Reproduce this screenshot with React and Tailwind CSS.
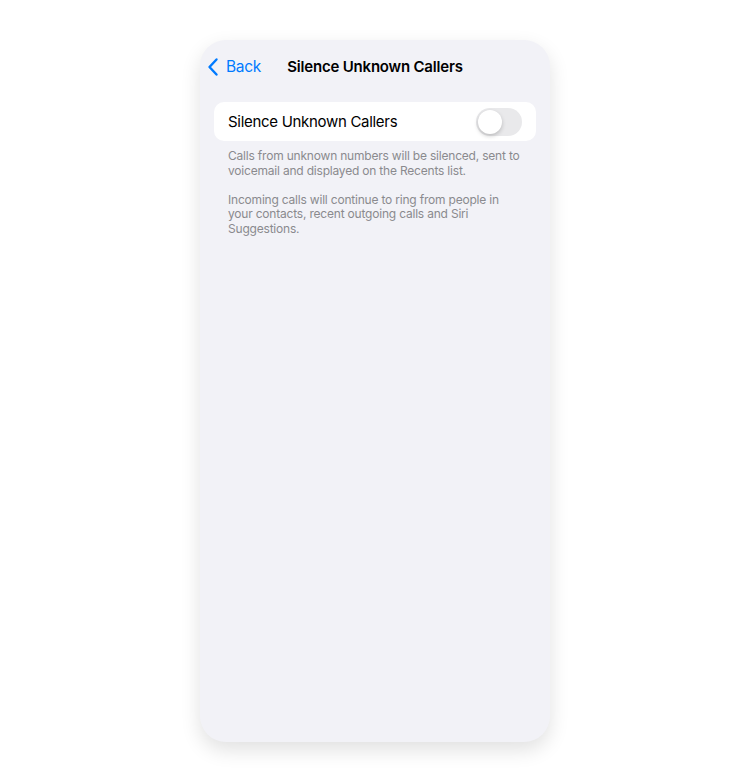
import React, { useState } from 'react';

function Toggle({ on, onChange }) {
    return (
        <button
            onClick={() => onChange(!on)}
            className={`relative w-[46px] h-[28px] rounded-full transition-colors ${on ? 'bg-[#34c759]' : 'bg-[#e9e9eb]'}`}
        >
            <span
                className={`absolute top-[2px] w-[24px] h-[24px] rounded-full bg-white shadow-[0_2px_4px_rgba(0,0,0,0.2)] transition-all ${on ? 'left-[20px]' : 'left-[2px]'}`}
            />
        </button>
    );
}

export default function App() {
    const [silenced, setSilenced] = useState(false);

    return (
        <div className="min-h-screen bg-white flex justify-center pt-[40px] font-['Inter',sans-serif]">
            <div className="w-[350px] h-[702px] bg-[#f2f2f7] rounded-[26px] shadow-[0_8px_20px_rgba(0,0,0,0.12)] overflow-hidden">
                {/* nav bar */}
                <div className="relative h-[52px] flex items-center px-[6px] pt-[2px]">
                    <button className="flex items-center text-[#007aff] text-[15.5px] tracking-[-0.3px]">
                        <svg width="14" height="20" viewBox="0 0 14 20" fill="none" className="mr-[6px]">
                            <path d="M10.5 2.5L3.5 10L10.5 17.5" stroke="#007aff" strokeWidth="2.4" strokeLinecap="round" strokeLinejoin="round" />
                        </svg>
                        Back
                    </button>
                    <h1 className="absolute left-0 right-0 text-center text-[15px] tracking-[-0.2px] font-semibold text-black pointer-events-none">
                        Silence Unknown Callers
                    </h1>
                </div>

                <div className="px-[14px] pt-[10px]">
                    <div className="bg-white rounded-[10px] h-[39px] flex items-center justify-between pl-[14px] pr-[14px]">
                        <span className="text-[15px] tracking-[-0.3px] text-black mt-[2px]">Silence Unknown Callers</span>
                        <Toggle on={silenced} onChange={setSilenced} />
                    </div>

                    <div className="pl-[14px] pr-[12px] pt-[8px] text-[12px] tracking-[-0.2px] leading-[14.5px] text-[#8a8a8e]">
                        <p>Calls from unknown numbers will be silenced, sent to voicemail and displayed on the Recents list.</p>
                        <p className="mt-[14.5px]">
                            Incoming calls will continue to ring from people in your contacts, recent outgoing calls and Siri Suggestions.
                        </p>
                    </div>
                </div>
            </div>
        </div>
    );
}
